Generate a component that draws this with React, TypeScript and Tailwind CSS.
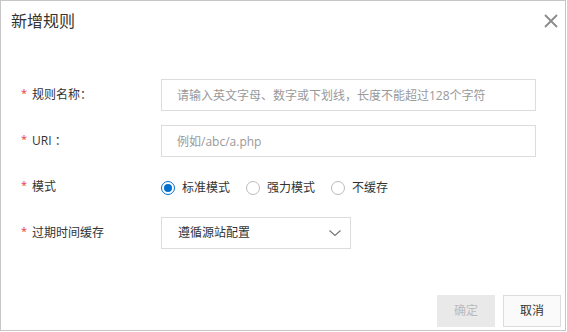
import { useState } from "react";

const FONT = { fontFamily: '"Open Sans", "Noto Sans CJK SC", sans-serif' };

const MODES = ["标准模式", "强力模式", "不缓存"];

function Label({ text }: { text: string }) {
  return (
    <div className="flex w-[160px] shrink-0 items-center pl-[20px] text-[12px] text-[#333]">
      <span className="mr-[5px] -mt-[3px] text-[11px] text-[#e4393c]">*</span>
      {text}
    </div>
  );
}

export default function App() {
  const [mode, setMode] = useState(0);

  return (
    <div
      style={FONT}
      className="relative flex h-[331px] w-[566px] flex-col border border-[#c6c6c6] bg-white"
    >
      {/* Header */}
      <div className="flex h-[40px] items-center justify-between pl-[10px] pr-[2px]">
        <h1 className="text-[16px] leading-none text-[#333]">新增规则</h1>
        <button className="p-1 text-[#8a8a8a]" aria-label="关闭">
          <svg width="16" height="16" viewBox="0 0 16 16" stroke="currentColor" strokeWidth={1.8} fill="none">
            <path d="M2 2l12 12M14 2L2 14" />
          </svg>
        </button>
      </div>

      {/* Form */}
      <div className="mt-[38px] flex flex-col gap-[14px]">
        <div className="flex h-[32px]">
          <Label text="规则名称：" />
          <input
            className="h-[32px] w-[375px] border border-[#dcdcdc] px-[15px] text-[12px] text-[#333] outline-none placeholder:text-[#999]"
            placeholder="请输入英文字母、数字或下划线，长度不能超过128个字符"
          />
        </div>
        <div className="flex h-[32px]">
          <Label text="URI ：" />
          <input
            className="h-[32px] w-[375px] border border-[#dcdcdc] px-[15px] text-[12px] text-[#333] outline-none placeholder:text-[#999]"
            placeholder="例如/abc/a.php"
          />
        </div>
        <div className="flex h-[32px]">
          <Label text="模式" />
          <div className="flex items-center pt-[2px] text-[12px] text-[#333]">
            {MODES.map((m, i) => (
              <label key={m} className="mr-[16px] flex cursor-pointer items-center gap-[7px]" onClick={() => setMode(i)}>
                <span
                  className={`flex h-[14px] w-[14px] items-center justify-center rounded-full border ${
                    mode === i ? "border-[#0070cc]" : "border-[#bbb]"
                  } bg-white`}
                >
                  {mode === i && <span className="h-[8px] w-[8px] rounded-full bg-[#0070cc]" />}
                </span>
                {m}
              </label>
            ))}
          </div>
        </div>
        <div className="flex h-[32px]">
          <Label text="过期时间缓存" />
          <div className="flex h-[32px] w-[190px] items-center justify-between border border-[#dcdcdc] pl-[16px] pr-[8px] text-[12px] text-[#333]">
            <span>遵循源站配置</span>
            <svg width="14" height="14" viewBox="0 0 14 14" fill="none" stroke="#777" strokeWidth={1.2}>
              <path d="M1.5 4.5L7 9.5l5.5-5" />
            </svg>
          </div>
        </div>
      </div>

      {/* Footer */}
      <div className="mt-auto mb-[3px] flex justify-end gap-[8px] pr-[4px]">
        <button className="h-[32px] w-[58px] bg-[#e9e9e9] text-[12px] text-[#bbb]" disabled>
          确定
        </button>
        <button className="h-[32px] w-[58px] border border-[#dcdcdc] bg-[#fafafa] text-[12px] text-[#333]">
          取消
        </button>
      </div>
    </div>
  );
}
